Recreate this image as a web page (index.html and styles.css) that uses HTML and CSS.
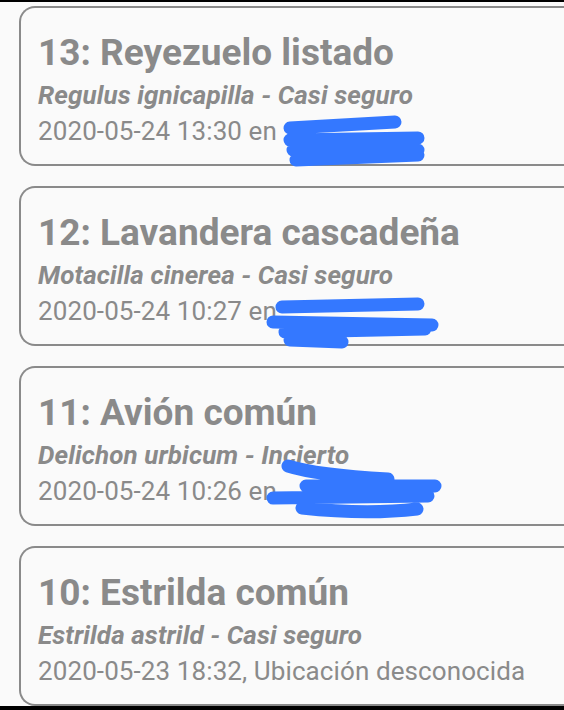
FILE: index.html
```html
<!DOCTYPE html>
<html lang="es">
<head>
  <meta charset="UTF-8">
  <title>Avistamientos</title>
  <link rel="stylesheet" href="styles.css">
</head>
<body>

<div class="bar-top"></div>

<div class="list">
  <div class="card">
    <div class="title">13: Reyezuelo listado</div>
    <div class="sub">Regulus ignicapilla - Casi seguro</div>
    <div class="when">2020-05-24 13:30 en</div>
    <svg class="scribble" width="190" height="80" viewBox="0 0 190 80">
      <path d="M24 30 L129 24 M24 42 L152 40 M27 52 L152 52 M30 62 L152 57"/>
    </svg>
  </div>

  <div class="card">
    <div class="title">12: Lavandera cascadeña</div>
    <div class="sub">Motacilla cinerea - Casi seguro</div>
    <div class="when">2020-05-24 10:27 en</div>
    <svg class="scribble" width="190" height="80" viewBox="0 0 190 80">
      <path d="M16 29 L152 26 M7 44 L166 47 M19 54 L159 51 M24 62 L76 64"/>
    </svg>
  </div>

  <div class="card">
    <div class="title">11: Avión común</div>
    <div class="sub">Delichon urbicum - Incierto</div>
    <div class="when">2020-05-24 10:26 en</div>
    <svg class="scribble" width="190" height="80" viewBox="0 0 190 80">
      <path d="M22 8 Q50 17 122 21 M40 28 L169 28 M7 40 L162 38 M36 50 Q100 57 151 51"/>
    </svg>
  </div>

  <div class="card">
    <div class="title">10: Estrilda común</div>
    <div class="sub">Estrilda astrild - Casi seguro</div>
    <div class="when">2020-05-23 18:32, Ubicación desconocida</div>
  </div>
</div>

</body>
</html>
```

FILE: styles.css
```css
body {
  margin: 0;
  background-color: #fafafa;
  font-family: Roboto, "Noto Sans", sans-serif;
  color: #8a8a8a;
  overflow: hidden;
  height: 710px;
  position: relative;
}

.bar-top {
  height: 2px;
  background-color: #000;
}

.list {
  display: flex;
  flex-direction: column;
  gap: 20px;
  padding: 4px 0 0 19px;
}

.card {
  position: relative;
  height: 156px;
  border: 2px solid #8a8a8a;
  border-right: none;
  border-radius: 16px 0 0 16px;
  padding-left: 17px;
}

.title {
  font-size: 37px;
  font-weight: bold;
  line-height: 40px;
  margin-top: 25px;
}

.sub {
  font-size: 26px;
  font-weight: bold;
  font-style: italic;
  letter-spacing: 0.1px;
  line-height: 32px;
  margin-top: 6px;
}

.when {
  font-size: 26px;
  letter-spacing: 0.1px;
  line-height: 32px;
  margin-top: 4px;
}

.scribble {
  position: absolute;
  left: 245px;
  top: 90px;
}

.scribble path {
  fill: none;
  stroke: #3478ff;
  stroke-width: 13;
  stroke-linecap: round;
  stroke-linejoin: round;
}

body::after {
  content: "";
  position: absolute;
  left: 0;
  right: 0;
  bottom: 0;
  height: 4px;
  background-color: #000;
}
```
